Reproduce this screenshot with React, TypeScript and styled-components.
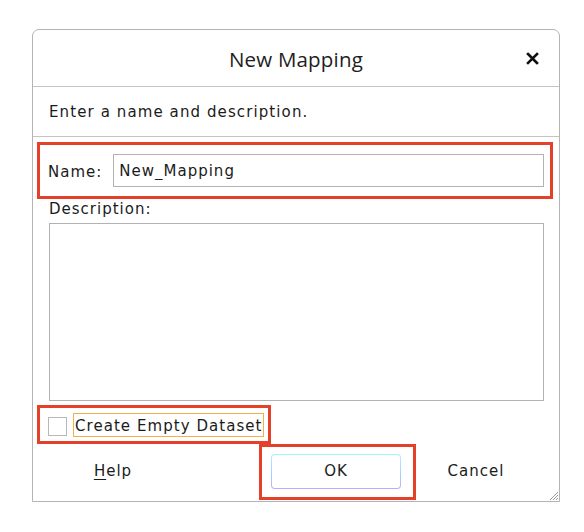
import styled, { createGlobalStyle } from "styled-components";

const GlobalStyle = createGlobalStyle`
  html, body {
    margin: 0;
    background: #ffffff;
  }
  body {
    font-family: "DejaVu Sans", "Liberation Sans", sans-serif;
    color: #1b1b1b;
  }
`;

export default function App() {
  return (
    <Page>
      <GlobalStyle />
      <Dialog>
        <Header>
          <Title>New Mapping</Title>
          <CloseButton aria-label="close">
            <svg width="13" height="13" viewBox="0 0 13 13">
              <path d="M2 2 L11 11 M11 2 L2 11" stroke="#111" strokeWidth="2.6" strokeLinecap="square" />
            </svg>
          </CloseButton>
        </Header>
        <Instruction>Enter a name and description.</Instruction>
        <Body>
          <Highlight>
            <NameRow>
              <Label>Name:</Label>
              <TextInput defaultValue="New_Mapping" />
            </NameRow>
          </Highlight>
          <DescLabel>Description:</DescLabel>
          <DescArea />
          <CheckHighlight>
            <CheckRow>
              <CheckBox type="checkbox" />
              <CheckLabel>Create Empty Dataset</CheckLabel>
            </CheckRow>
          </CheckHighlight>
          <ButtonRow>
            <PlainButton>
              <u>H</u>elp
            </PlainButton>
            <OkHighlight>
              <OkButton>OK</OkButton>
            </OkHighlight>
            <PlainButton $width={120}>Cancel</PlainButton>
          </ButtonRow>
        </Body>
        <Grip width="12" height="12" viewBox="0 0 12 12">
          <path d="M11 3 L3 11 M11 6 L6 11 M11 9 L9 11" stroke="#9a9a9a" strokeWidth="1" />
        </Grip>
      </Dialog>
    </Page>
  );
}

const Page = styled.div`
  padding: 29px 0 0 32px;
`;

const Dialog = styled.div`
  position: relative;
  width: 526px;
  height: 471px;
  border: 1px solid #b4b4b4;
  border-radius: 7px 7px 0 0;
  background: #ffffff;
  box-shadow: 0 3px 0 -1px #b8b8b8;
  display: flex;
  flex-direction: column;
`;

const Header = styled.div`
  height: 56px;
  border-bottom: 1px solid #c4c4c4;
  display: flex;
  align-items: center;
  justify-content: center;
  position: relative;
`;

const Title = styled.div`
  font-family: "Open Sans", "Noto Sans", sans-serif;
  font-size: 20.5px;
  font-weight: 500;
  color: #1e1e1e;
  margin-top: 1px;
  letter-spacing: 0.2px;
`;

const CloseButton = styled.div`
  position: absolute;
  right: 20px;
  top: 22px;
  display: flex;
`;

const Instruction = styled.div`
  height: 50px;
  border-bottom: 1px solid #c4c4c4;
  display: flex;
  align-items: center;
  padding: 1px 0 0 16px;
  box-sizing: border-box;
  font-size: 15px;
  letter-spacing: 1.1px;
`;

const Body = styled.div`
  display: flex;
  flex-direction: column;
  padding: 5px 6px 0 4px;
`;

const Highlight = styled.div`
  border: 3px solid #e5402a;
`;

const NameRow = styled.div`
  display: flex;
  align-items: center;
  padding: 9px 6px 9px 8px;
  gap: 11px;
`;

const Label = styled.span`
  font-size: 15px;
  letter-spacing: 1px;
  margin-top: 3px;
`;

const TextInput = styled.input`
  flex: 1;
  height: 33px;
  box-sizing: border-box;
  border: 1px solid #b2b2b2;
  padding: 0 5px 0;
  font-family: "DejaVu Sans", sans-serif;
  font-size: 15px;
  letter-spacing: 1px;
  color: #1b1b1b;
  outline: none;
`;

const DescLabel = styled.div`
  font-size: 15px;
  letter-spacing: 1px;
  margin: 0 0 0 12px;
  padding-top: 1px;
  height: 24px;
  box-sizing: border-box;
  line-height: 18px;
`;

const DescArea = styled.div`
  height: 176px;
  margin: 0 9px 0 12px;
  border: 1px solid #b2b2b2;
`;

const CheckHighlight = styled(Highlight)`
  align-self: flex-start;
  margin-top: 4px;
  width: 228px;
`;

const CheckRow = styled.div`
  display: flex;
  align-items: center;
  height: 33px;
  padding-left: 8px;
  gap: 6px;
`;

const CheckBox = styled.input`
  appearance: none;
  width: 19px;
  height: 19px;
  margin: 3px 0 0 0;
  border: 1px solid #b8b8b8;
  background: #ffffff;
  box-sizing: border-box;
`;

const CheckLabel = styled.span`
  border: 1px solid #f4b044;
  height: 24px;
  box-sizing: border-box;
  padding: 2px 0 0 1px;
  line-height: 20px;
  font-size: 15px;
  letter-spacing: 1.05px;
  margin-top: 1px;
`;

const ButtonRow = styled.div`
  display: flex;
  align-items: flex-start;
  padding-left: 11px;
`;

const PlainButton = styled.div<{ $width?: number }>`
  width: ${(p) => p.$width ?? 130}px;
  height: 52px;
  padding-top: 2px;
  box-sizing: border-box;
  display: flex;
  align-items: center;
  justify-content: center;
  font-size: 15px;
  letter-spacing: 1px;
  u {
    text-decoration-thickness: 1px;
    text-underline-offset: 3px;
  }
`;

const OkHighlight = styled(Highlight)`
  margin-left: 81px;
  padding: 7px 12px 8px 9px;
`;

const OkButton = styled.div`
  width: 130px;
  height: 35px;
  box-sizing: border-box;
  padding-bottom: 1px;
  border: 1px solid transparent;
  border-radius: 4px;
  background:
    linear-gradient(#ffffff, #ffffff) padding-box,
    linear-gradient(#a9f2ff, #b3b0ff) border-box;
  display: flex;
  align-items: center;
  justify-content: center;
  font-size: 15px;
  letter-spacing: 1px;
`;

const Grip = styled.svg`
  position: absolute;
  right: 0;
  bottom: 0;
`;
